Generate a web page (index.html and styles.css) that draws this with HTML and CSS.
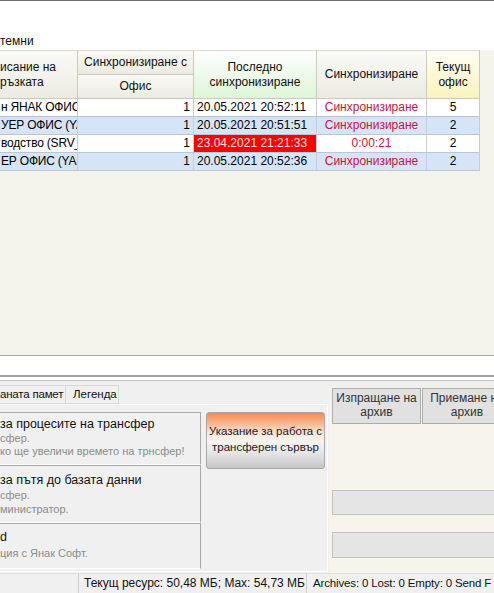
FILE: index.html
```html
<!DOCTYPE html>
<html lang="bg">
<head>
<meta charset="utf-8">
<title>Трансфер</title>
<link rel="stylesheet" href="styles.css">
</head>
<body>
<div class="screen">
  <div class="topline"></div>
  <div class="toparea"><span class="toplabel">темни</span></div>
  <div class="main">
    <div class="grid">
      <div class="h hcol1 span2"><span class="clip">исание на<br>ръзката</span></div>
      <div class="h hc">Синхронизиране с</div>
      <div class="h hgreen span2 hc">Последно<br>синхронизиране</div>
      <div class="h span2 hc">Синхронизиране</div>
      <div class="h hyellow span2 hc">Текущ<br>офис</div>
      <div class="h hc">Офис</div>

      <div class="c name">н ЯНАК ОФИС</div>
      <div class="c num">1</div>
      <div class="c date">20.05.2021 20:52:11</div>
      <div class="c ctr red">Синхронизиране</div>
      <div class="c ctr">5</div>

      <div class="c name b">УЕР ОФИС (YA</div>
      <div class="c num b">1</div>
      <div class="c date b">20.05.2021 20:51:51</div>
      <div class="c ctr red b">Синхронизиране</div>
      <div class="c ctr b">2</div>

      <div class="c name">водство (SRV_</div>
      <div class="c num">1</div>
      <div class="c date alert">23.04.2021 21:21:33</div>
      <div class="c ctr red">0:00:21</div>
      <div class="c ctr">2</div>

      <div class="c name b">ЕР ОФИС (YAS</div>
      <div class="c num b">1</div>
      <div class="c date b">20.05.2021 20:52:36</div>
      <div class="c ctr red b">Синхронизиране</div>
      <div class="c ctr b">2</div>
    </div>
  </div>
  <div class="whitestrip"></div>
  <div class="splitter"></div>
  <div class="bottom">
    <div class="leftpanel">
      <div class="tabs">
        <div class="tab t1">аната памет</div>
        <div class="tab t2">Легенда</div>
      </div>
      <div class="pane">
        <div class="items">
          <div class="item i1">
            <div class="ititle">за процесите на трансфер</div>
            <div class="isub">сфер.</div>
            <div class="isub">ко ще увеличи времето на трнсфер!</div>
          </div>
          <div class="item i2">
            <div class="ititle">за пътя до базата данни</div>
            <div class="isub s2">сфер.</div>
            <div class="isub s2">министратор.</div>
          </div>
          <div class="item i3">
            <div class="ititle">d</div>
            <div class="isub s3">ция с Янак Софт.</div>
          </div>
        </div>
        <div class="btnarea">
          <button class="orange">Указание за работа с<br>трансферен сървър</button>
        </div>
      </div>
    </div>
    <div class="rightpanel">
      <div class="rbtns">
        <button class="gbtn">Изпращане на<br>архив</button>
        <button class="gbtn g2">Приемане на<br>архив</button>
      </div>
      <div class="bar bar1"></div>
      <div class="bar bar2"></div>
    </div>
  </div>
  <div class="status">
    <div class="sp sp1"></div>
    <div class="sp sp2">Текущ ресурс: 50,48 МБ; Max: 54,73 МБ</div>
    <div class="sp sp3">Archives: 0 Lost: 0 Empty: 0 Send F</div>
  </div>
</div>
</body>
</html>
```

FILE: styles.css
```css
html, body {
  margin: 0;
  padding: 0;
  background: #ffffff;
}
body {
  font-family: "Liberation Sans", Arial, sans-serif;
  font-size: 12px;
  color: #000;
}
.screen {
  width: 494px;
  height: 593px;
  overflow: hidden;
  display: flex;
  flex-direction: column;
}
.topline {
  height: 1px;
  background: #6e6e6e;
  flex: none;
}
.toparea {
  height: 49px;
  flex: none;
  background: #fff;
  display: flex;
  align-items: flex-end;
}
.toplabel {
  font-size: 12px;
  line-height: 14px;
  padding-bottom: 2px;
  color: #111;
}
.main {
  height: 305px;
  flex: none;
  background: #f4f3ec;
}
.grid {
  display: grid;
  grid-template-columns: 78px 116px 123px 110px 53px;
  grid-template-rows: 25px 24px 18px 18px 18px 18px;
  width: 480px;
}
.h {
  box-sizing: border-box;
  border-right: 1px solid #cdc9bb;
  border-bottom: 1px solid #cdc9bb;
  background: linear-gradient(#fafaf6, #ecebe2);
  line-height: 15px;
  color: #111;
}
.grid > .h:nth-child(-n+5) {
  border-top: 1px solid #dcd9cc;
}
.span2 {
  grid-row: span 2;
}
.hc {
  display: flex;
  align-items: center;
  justify-content: center;
  text-align: center;
}
.hcol1 {
  display: flex;
  align-items: center;
  overflow: hidden;
  white-space: nowrap;
}
.hgreen {
  background: linear-gradient(#ffffff 0%, #f3fbf1 35%, #dcf6d6 100%);
}
.hyellow {
  background: linear-gradient(#fffef6 0%, #fdf9dc 40%, #faf3bf 100%);
}
.c {
  box-sizing: border-box;
  border-right: 1px solid #c9ccd2;
  border-bottom: 1px solid #bac6d3;
  background: #ffffff;
  line-height: 17px;
  white-space: nowrap;
  overflow: hidden;
  padding: 0 2px;
}
.c.b {
  background: #d5e5f7;
}
.name {
  padding: 0 0 0 1px;
  text-overflow: clip;
  letter-spacing: -0.2px;
}
.num {
  text-align: right;
  padding-right: 3px;
}
.date {
  padding-left: 3px;
}
.ctr {
  text-align: center;
}
.red {
  color: #cc1436;
}
.c.alert {
  background: #ff0000;
  color: #ffe8e8;
}
.whitestrip {
  height: 19px;
  flex: none;
  background: #fff;
  border-top: 1px solid #a3a3a3;
}
.splitter {
  height: 3px;
  flex: none;
  border-top: 2px solid #a0a0a0;
  border-bottom: 1px solid #c4c4c4;
  background: #fff;
}
.bottom {
  height: 192px;
  flex: none;
  display: flex;
  background: #f0f0f0;
}
.leftpanel {
  width: 329px;
  flex: none;
  padding-top: 4px;
  box-sizing: border-box;
}
.tabs {
  display: flex;
  height: 19px;
}
.tab {
  box-sizing: border-box;
  height: 19px;
  border: 1px solid #d9d9d9;
  border-left: none;
  line-height: 17px;
  font-size: 12px;
  color: #111;
  background: #f0f0f0;
  white-space: nowrap;
  overflow: hidden;
}
.t1 {
  width: 66px;
  font-size: 11.5px;
  letter-spacing: -0.2px;
}
.t2 {
  width: 53px;
  padding-left: 7px;
  font-size: 11.5px;
}
.pane {
  width: 328px;
  height: 168px;
  box-sizing: border-box;
  border-top: 1px solid #ffffff;
  border-right: 1px solid #ffffff;
  border-bottom: 1px solid #ffffff;
  display: flex;
}
.items {
  width: 201px;
  flex: none;
  padding-top: 7px;
  display: flex;
  flex-direction: column;
}
.item {
  box-sizing: border-box;
  border: 1px solid #a9a9a9;
  border-left: none;
  border-bottom-color: #ffffff;
  background: #f0f0f0;
}
.i1 {
  height: 53px;
  padding-top: 3px;
}
.i2 {
  height: 58px;
  padding-top: 6px;
}
.i3 {
  height: 46px;
  padding-top: 5px;
}
.ititle {
  font-size: 12.5px;
  line-height: 16px;
  color: #111;
  white-space: nowrap;
}
.isub {
  font-size: 11px;
  line-height: 13px;
  color: #8c8c8c;
  white-space: nowrap;
}
.s2 {
  line-height: 14px;
}
.s3 {
  line-height: 17px;
}
.btnarea {
  padding: 7px 0 0 5px;
}
.orange {
  width: 119px;
  height: 57px;
  box-sizing: border-box;
  border: 1px solid #a9a9a9;
  border-radius: 3px;
  background: linear-gradient(#f7884a 0%, #f9b48c 18%, #fde9dc 38%, #f6f3f1 52%, #e3e3e3 75%, #c6c6c6 100%);
  font-family: "Liberation Sans", Arial, sans-serif;
  font-size: 11.5px;
  line-height: 16px;
  color: #1a1a1a;
  padding: 0 0 3px;
  text-align: center;
  white-space: nowrap;
}
.rightpanel {
  flex: 1;
  background: linear-gradient(#f0f0f0 0px, #f5f3ec 30px, #f7f4ea 100%);
  padding: 7px 0 0 3px;
  overflow: hidden;
}
.rbtns {
  display: flex;
  gap: 1px;
  width: 200px;
}
.gbtn {
  flex: none;
  width: 89px;
  height: 36px;
  box-sizing: border-box;
  border: 1px solid #adadad;
  background: #e1e1e1;
  font-family: "Liberation Sans", Arial, sans-serif;
  font-size: 12px;
  line-height: 14px;
  color: #333;
  padding: 0 0 2px;
  text-align: center;
  white-space: nowrap;
}
.g2 {
  width: 90px;
}
.bar {
  box-sizing: border-box;
  height: 25px;
  border: 1px solid #c2c2c2;
  border-right: none;
  background: #e5e5e5;
}
.bar1 {
  margin-top: 66px;
}
.bar2 {
  margin-top: 17px;
  height: 26px;
}
.status {
  height: 21px;
  flex: none;
  background: #f0f0f0;
  border-top: 1px solid #e0e0e0;
  box-sizing: border-box;
  display: flex;
  font-size: 12px;
  line-height: 19px;
  color: #111;
  white-space: nowrap;
  overflow: hidden;
}
.sp {
  box-sizing: border-box;
  flex: none;
}
.sp1 {
  width: 79px;
  border-right: 1px solid #d0d0d0;
}
.sp2 {
  width: 228px;
  padding-left: 5px;
  border-right: 1px solid #d0d0d0;
}
.sp3 {
  padding-left: 6px;
  font-size: 11.5px;
  letter-spacing: -0.15px;
}
```
